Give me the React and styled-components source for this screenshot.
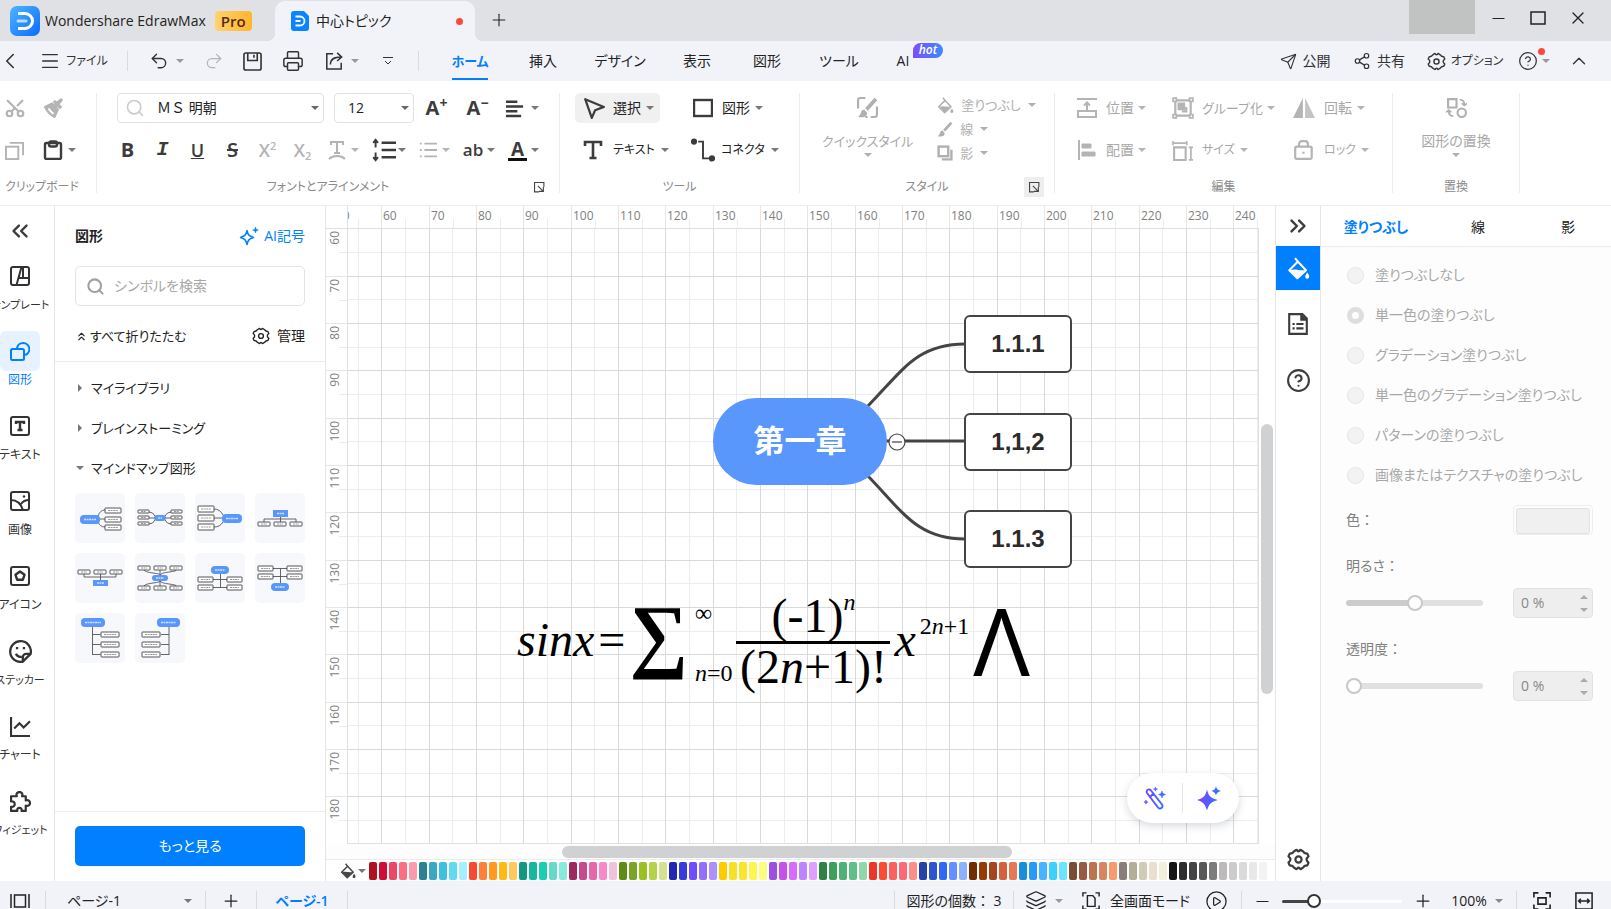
import { useState } from "react";
import styled, { createGlobalStyle, css } from "styled-components";
import {
  Undo2, Redo2, Printer, Share2, ChevronLeft, ChevronUp, Minus, Plus, X, Square, Menu,
  Scissors, Search, ChevronsLeft, ChevronsRight, ChevronsUp, CircleHelp, Send,
  Layers, CirclePlay,
} from "lucide-react";

const GlobalStyle = createGlobalStyle`
* { box-sizing:border-box; }
html, body, #root { height:100%; }
body {
  margin:0;
  overflow:hidden;
  font-family:"Open Sans", "Noto Sans CJK JP", sans-serif;
  font-size:14px;
  line-height:20px;
  color:#222;
  font-feature-settings:"palt";
}
button, input, select { font:inherit; font-feature-settings:inherit; color:inherit; }
button { border:0; padding:0; background:none; white-space:nowrap; }
svg { display:block; flex:none; }
`;

const Shell = styled.div`
display:grid;
grid-template-rows:41px 40px 125px minmax(0,1fr) 28px;
height:100vh;
`;

/* title bar */
const TitleBar = styled.header`
display:flex;
background:#e0e1e5;
padding:0 13px 0 10px;
`;
const Brand = styled.div`
display:flex;
align-items:center;
width:265px;
gap:5px;
white-space:nowrap;
`;
const ProBadge = styled.span`
margin-left:4px;
padding:0 6px;
border-radius:4px;
font-size:15px;
font-weight:600;
color:#5a2a12;
background:linear-gradient(90deg,#ffd36f,#ffb52b);
`;
const DocTab = styled.div`
display:flex;
align-items:center;
position:relative;
width:200px;
margin-top:1px;
padding:0 12px 0 16px;
gap:7px;
background:#f2f3f9;
border-radius:10px 10px 0 0;
&:before, &:after {
  content:"";
  position:absolute;
  bottom:0;
  width:8px;
  height:8px;
}
&:before { right:100%; background:radial-gradient(circle at 0 0,transparent 8px,#f2f3f9 8px); }
&:after { left:100%; background:radial-gradient(circle at 100% 0,transparent 8px,#f2f3f9 8px); }
`;
const Dot = styled.span`
width:7px;
height:7px;
margin-left:auto;
border-radius:50%;
background:#ff4838;
`;
const WindowButton = styled.button`
display:flex;
align-items:center;
justify-content:center;
width:${(p) => p.$w || 40}px;
height:${(p) => p.$h || 36}px;
`;
const Account = styled.div`
width:66px;
height:34px;
margin-left:auto;
margin-right:3px;
background:#c1c3c3;
`;

/* menu bar */
const MenuBar = styled.nav`
display:flex;
align-items:center;
background:#f2f3f9;
white-space:nowrap;
`;
const MenuButton = styled.button`
display:flex;
align-items:center;
justify-content:center;
width:${(p) => p.$w}px;
height:40px;
gap:${(p) => p.$gap || 6}px;
font-size:${(p) => p.$size || 14}px;
color:#333;
`;
const Divider = styled.span`
width:1px;
height:20px;
margin-left:${(p) => p.$ml || 0}px;
background:#dadbe0;
`;
const MenuTab = styled.button`
position:relative;
width:${(p) => p.$w}px;
height:40px;
color:#222;
${(p) => p.$active && css`
color:#0080ff;
font-size:13px;
font-weight:600;
&:after {
  content:"";
  position:absolute;
  left:50%;
  bottom:1px;
  width:36px;
  height:2px;
  margin-left:-18px;
  background:#0080ff;
}
`}
`;
const Hot = styled.span`
position:absolute;
left:50px;
top:2px;
width:30px;
height:15px;
border-radius:8px 8px 8px 0;
background:linear-gradient(90deg,#7c4dff,#3b8bff);
color:#fff;
font-size:12px;
font-style:italic;
font-weight:600;
line-height:14px;
`;
const MenuRight = styled.div`
display:flex;
align-items:center;
margin-left:auto;
padding-right:12px;
`;
const HelpWrap = styled.span`
position:relative;
&:after {
  content:"";
  position:absolute;
  right:-7px;
  top:-3px;
  width:7px;
  height:7px;
  border-radius:50%;
  background:#ff4838;
}
`;
const Caret = styled.span`
flex:none;
border:4px solid transparent;
border-top:4px solid ${(p) => p.$color || "currentColor"};
border-bottom:0;
`;

/* ribbon */
const Ribbon = styled.section`
display:flex;
padding:12px 0;
background:#fff;
border-bottom:1px solid #ececec;
color:#333;
overflow:hidden;
`;
const Group = styled.div`
display:grid;
grid-template-rows:30px 12px 30px 1fr;
grid-template-columns:100%;
flex:0 0 ${(p) => p.$w}px;
height:100px;
padding:0 ${(p) => p.$pad || 0}px;
border-right:1px solid #ececec;
`;
const Row = styled.div`
display:flex;
align-items:center;
grid-row:${(p) => p.$row};
gap:${(p) => p.$gap || 0}px;
padding-left:${(p) => p.$pl || 0}px;
`;
const GroupLabel = styled.div`
display:flex;
align-items:center;
justify-content:center;
grid-row:4;
position:relative;
padding:14px ${(p) => p.$pr || 0}px 0 0;
font-size:12px;
line-height:16px;
color:#8a8a8a;
white-space:nowrap;
`;
const Expand = styled.button`
display:flex;
align-items:center;
justify-content:center;
position:absolute;
right:10px;
bottom:-2px;
width:20px;
height:20px;
background:${(p) => (p.$on ? "#eee" : "none")};
color:#444;
`;
const Tool = styled.button`
display:flex;
align-items:center;
flex:none;
justify-content:${(p) => (p.$left ? "flex-start" : "center")};
width:${(p) => p.$w || 35}px;
height:30px;
padding-left:${(p) => (p.$left ? 8 : 0)}px;
gap:${(p) => p.$gap || 5}px;
border-radius:5px;
background:${(p) => (p.$on ? "#f0f0f0" : "none")};
color:${(p) => (p.disabled ? "#b4b4b4" : "#3c3c3c")};
font-size:${(p) => p.$size || 14}px;
`;
const ToolText = styled.span`
margin-left:${(p) => p.$ml || 0}px;
color:${(p) => (p.$off ? "#a8a8a8" : "#222")};
`;
const BigTool = styled.button`
display:flex;
flex-direction:column;
align-items:center;
grid-row:1 / 4;
padding-top:4px;
color:#b0b0b0;
font-size:${(p) => p.$size || 14}px;
& span:first-of-type { margin:13px 0 2px; color:#a8a8a8; }
`;
const Field = styled.label`
display:flex;
align-items:center;
flex:none;
position:relative;
width:${(p) => p.$w}px;
height:30px;
margin-right:${(p) => p.$mr || 0}px;
border:1px solid #e2e2e2;
border-radius:4px;
& > svg { position:absolute; left:7px; pointer-events:none; }
& select {
  width:100%;
  height:28px;
  padding:0 20px 0 ${(p) => p.$indent}px;
  border:0;
  background:none;
  appearance:none;
  color:#222;
  font-feature-settings:normal;
}
& ${Caret} { position:absolute; right:4px; pointer-events:none; }
`;
const StyleList = styled.div`
display:flex;
flex-direction:column;
grid-row:1 / 4;
& button {
  display:flex;
  align-items:center;
  height:24px;
  gap:7px;
  font-size:13px;
  color:#b0b0b0;
}
`;
const Split = styled.div`
display:flex;
grid-row:1 / 4;
gap:24px;
padding-left:22px;
`;

/* work area */
const Work = styled.main`
display:grid;
grid-template-columns:55px 271px minmax(0,1fr) 46px 290px;
background:#fff;
`;
const Rail = styled.nav`
display:flex;
flex-direction:column;
border-right:1px solid #e6e6e6;
padding-top:15px;
overflow:hidden;
`;
const Collapse = styled.button`
width:40px;
height:20px;
margin-bottom:15px;
display:flex;
align-items:center;
justify-content:center;
color:#3c3c3c;
`;
const RailItem = styled.button`
display:flex;
flex-direction:column;
align-items:center;
width:40px;
height:75px;
flex:none;
font-size:${(p) => (p.$long ? 11 : 12)}px;
line-height:17px;
color:${(p) => (p.$active ? "#0080ff" : "#333")};
& span {
  display:flex;
  align-items:center;
  justify-content:center;
  width:40px;
  height:40px;
  border-radius:6px;
  background:${(p) => (p.$active ? "#e6f2ff" : "none")};
}
`;
const Panel = styled.aside`
display:flex;
flex-direction:column;
border-right:1px solid #e6e6e6;
`;
const PanelTop = styled.div`
padding:20px 20px 15px;
border-bottom:1px solid #ececec;
`;
const Between = styled.div`
display:flex;
justify-content:space-between;
align-items:center;
height:20px;
`;
const PanelTitle = styled.h2`
margin:0;
font-size:14px;
font-weight:700;
`;
const TextButton = styled.button`
display:flex;
align-items:center;
gap:${(p) => p.$gap || 5}px;
font-size:${(p) => p.$size || 14}px;
color:${(p) => (p.$blue ? "#0080ff" : "#222")};
`;
const SearchBox = styled.label`
display:flex;
align-items:center;
height:40px;
margin:20px 0;
padding:0 11px 0 10px;
gap:7px;
border:1px solid #e4e4e4;
border-radius:5px;
color:#a0a0a0;
& input {
  width:100%;
  border:0;
  outline:0;
  font-size:14px;
  background:none;
}
& input::placeholder { color:#a8a8a8; }
`;
const Tree = styled.div`
flex:1;
padding:16px 20px;
`;
const TreeItem = styled.button`
display:flex;
align-items:center;
gap:7px;
height:20px;
margin-bottom:20px;
font-size:13px;
color:#222;
&:before {
  content:"";
  border:4px solid transparent;
  ${(p) => (p.$open ? "margin-left:1px;border-top:4px solid #777;border-bottom:0;" : "margin:0 2px 0 3px;border-left:4px solid #777;border-right:0;")}
}
&:nth-of-type(3) { margin-bottom:15px; }
`;
const Thumbs = styled.div`
display:grid;
grid-template-columns:repeat(4,50px);
gap:10px;
& button {
  width:50px;
  height:50px;
  border-radius:5px;
  background:#f7f8fb;
}
`;
const PanelFoot = styled.div`
padding:14px 20px 15px;
border-top:1px solid #ececec;
`;
const MoreButton = styled.button`
width:100%;
height:40px;
border-radius:5px;
background:#0080ff;
color:#fff;
`;

/* canvas */
const Stage = styled.section`
display:grid;
grid-template-columns:22px minmax(0,1fr) 16px;
grid-template-rows:23px minmax(0,1fr) 16px 21px;
min-height:0;
`;
const Corner = styled.div`
border-right:1px solid #e0e0e0;
border-bottom:1px solid #e0e0e0;
`;
const RulerTop = styled.div`
display:flex;
overflow:hidden;
border-bottom:1px solid #e0e0e0;
font-size:12px;
line-height:20px;
color:#808080;
`;
const TopCell = styled.div`
flex:0 0 ${(p) => p.$w}px;
padding-left:1px;
border-left:1px solid #e6e6e6;
background:linear-gradient(#ececec,#ececec) 23px 13px / 1px 10px no-repeat;
&:first-child { margin-left:-14px; }
`;
const RulerLeft = styled.div`
overflow:hidden;
border-right:1px solid #e0e0e0;
font-size:12px;
line-height:18px;
color:#808080;
`;
const LeftCell = styled.div`
height:${(p) => p.$h}px;
border-bottom:1px solid #e6e6e6;
background:linear-gradient(#ececec,#ececec) 13px 23px / 10px 1px no-repeat;
& span {
  display:block;
  width:18px;
  writing-mode:vertical-rl;
  transform:rotate(180deg);
  padding-bottom:2px;
}
`;
const gridStops = (dir) => `linear-gradient(${dir},#d9d9d9 1px,transparent 1px 48px,#d9d9d9 48px 49px,transparent 49px 95px,#d9d9d9 95px 96px,transparent 96px)`;
const halfStops = (dir) => `linear-gradient(${dir},transparent 24px,#ededed 24px 25px,transparent 25px 71px,#ededed 71px 72px,transparent 72px 119px,#ededed 119px 120px,transparent 120px)`;
const Canvas = styled.div`
position:relative;
overflow:hidden;
border-right:1px solid #e0e0e0;
border-bottom:1px solid #e0e0e0;
background-image:${gridStops("to right")},${gridStops("to bottom")},${halfStops("to right")},${halfStops("to bottom")};
background-size:142px 142px;
background-position:33px -1px;
`;
const Links = styled.svg`
position:absolute;
left:499px;
top:79px;
`;
const Root = styled.div`
position:absolute;
left:365px;
top:169px;
width:174px;
height:87px;
display:flex;
align-items:center;
justify-content:center;
padding-bottom:4px;
border-radius:44px;
background:#5997fc;
color:#fff;
font-size:31px;
font-weight:700;
`;
const Topic = styled.div`
position:absolute;
left:616px;
top:${(p) => p.$y}px;
width:108px;
height:58px;
display:flex;
align-items:center;
justify-content:center;
border:2px solid #444;
border-radius:6px;
background:#fff;
color:#2b2b2b;
font-family:"Liberation Sans", sans-serif;
font-size:24px;
font-weight:700;
`;
const Formula = styled.div`
position:absolute;
left:169px;
top:358px;
height:112px;
display:flex;
align-items:center;
gap:4px;
font-family:"Liberation Serif", serif;
font-size:48px;
line-height:56px;
color:#000;
white-space:nowrap;
& sup { font-size:24px; line-height:24px; vertical-align:22px; }
`;
const Lead = styled.span`
display:flex;
gap:4px;
padding-bottom:6px;
`;
const Sum = styled.span`
padding-bottom:16px;
font-size:82px;
line-height:82px;
font-weight:700;
`;
const Limits = styled.span`
display:flex;
flex-direction:column;
justify-content:space-between;
height:84px;
padding-left:3px;
font-size:24px;
line-height:24px;
`;
const Fraction = styled.span`
display:flex;
flex-direction:column;
align-items:center;
width:154px;
padding-top:2px;
& > span:first-child {
  width:100%;
  text-align:center;
  height:54px;
  line-height:36px;
  border-bottom:3px solid #000;
}
& > span:last-child { height:54px; line-height:46px; }
`;
const Wedge = styled.span`
padding-bottom:6px;
font-family:"Open Sans", sans-serif;
font-size:94px;
line-height:94px;
`;
const AiPill = styled.div`
position:absolute;
right:19px;
bottom:20px;
display:flex;
align-items:center;
width:112px;
height:50px;
padding-left:2px;
border-radius:25px;
background:#fff;
box-shadow:0 3px 8px rgba(40,50,80,0.18);
& button { flex:1; display:flex; justify-content:center; }
& button + button { border-left:1px solid #e6e6e6; height:30px; align-items:center; padding-right:4px; }
`;
const ScrollX = styled.div`
grid-column:1 / 4;
padding:2px 0 0 236px;
background:#fdfdfd;
border-bottom:1px solid #ececec;
&:before {
  content:"";
  display:block;
  width:450px;
  height:12px;
  border-radius:6px;
  background:#d0d1d3;
}
`;
const ScrollY = styled.div`
grid-row:1 / 3;
grid-column:3;
padding:218px 0 0 2px;
&:before {
  content:"";
  display:block;
  width:12px;
  height:270px;
  border-radius:6px;
  background:#d0d1d3;
}
`;
const ColorBar = styled.div`
grid-column:1 / 4;
display:flex;
align-items:center;
gap:2px;
padding-left:14px;
overflow:hidden;
`;
const PickButton = styled.button`
display:flex;
align-items:center;
flex:none;
width:27px;
gap:2px;
color:#444;
`;
const Swatch = styled.button`
flex:0 0 8px;
height:18px;
border-radius:2px;
background:${(p) => p.$c};
`;

/* right side */
const SideTabs = styled.nav`
display:flex;
flex-direction:column;
align-items:center;
border-left:1px solid #e6e6e6;
border-right:1px solid #e6e6e6;
`;
const SideButton = styled.button`
display:flex;
align-items:center;
justify-content:center;
width:44px;
height:${(p) => p.$h || 44}px;
margin-bottom:${(p) => p.$mb || 0}px;
margin-top:${(p) => (p.$last ? "auto" : 0)};
background:${(p) => (p.$active ? "#0080ff" : "none")};
color:${(p) => (p.$active ? "#fff" : "#3c3c3c")};
`;
const Props = styled.aside`
background:#fdfdfd;
color:#808080;
`;
const PropTabs = styled.div`
display:grid;
grid-template-columns:110fr 94fr 86fr;
height:41px;
padding-top:1px;
background:#fff;
border-bottom:1px solid #ececec;
& button { color:#222; }
& button:first-child { color:#0080ff; font-weight:600; }
`;
const PropBody = styled.div`
padding:18px 18px 0 25px;
`;
const RadioRow = styled.label`
display:flex;
align-items:center;
height:20px;
margin-bottom:20px;
gap:11px;
font-size:14px;
color:#a8a8a8;
white-space:nowrap;
& input {
  flex:none;
  appearance:none;
  width:17px;
  height:17px;
  margin:0 0 0 1px;
  border:1px solid #e4e4e4;
  border-radius:50%;
  background:#f3f3f3;
}
& input:checked { border:5px solid #dedede; background:#fff; }
`;
const PropRow = styled.div`
display:flex;
align-items:center;
justify-content:space-between;
height:30px;
margin-top:${(p) => p.$mt || 0}px;
`;
const ColorButton = styled.button`
width:80px;
height:30px;
padding:2px;
border:1px solid #eee;
border-radius:4px;
&:before {
  content:"";
  display:block;
  height:24px;
  border:1px solid #e2e2e2;
  border-radius:3px;
  background:#f0f0f0;
}
`;
const PropLabel = styled.label`
display:block;
height:20px;
margin-top:${(p) => p.$mt}px;
`;
const Colon = styled.span`
font-feature-settings:normal;
`;
const Slider = styled.input`
appearance:none;
width:${(p) => p.$w}px;
height:${(p) => p.$h}px;
margin:0;
border-radius:3px;
background:linear-gradient(90deg,${(p) => p.$on} ${(p) => p.$fill}%,${(p) => p.$rest} ${(p) => p.$fill}%);
&::-webkit-slider-thumb {
  appearance:none;
  width:${(p) => p.$thumb}px;
  height:${(p) => p.$thumb}px;
  border:2px solid ${(p) => p.$ring};
  border-radius:50%;
  background:#fff;
}
`;
const Spin = styled.span`
display:flex;
align-items:center;
width:80px;
height:30px;
padding:0 4px 0 7px;
border:1px solid #e2e2e2;
border-radius:4px;
background:#eee;
& input { width:50px; border:0; padding:0; background:none; color:#888; }
& i { display:flex; flex-direction:column; gap:9px; margin-left:auto; }
`;
const CaretUp = styled(Caret)`
transform:rotate(180deg);
`;

/* status bar */
const Status = styled.footer`
display:flex;
align-items:center;
height:40px;
background:#f2f3f9;
white-space:nowrap;
color:#222;
`;
const StatusItem = styled.button`
display:flex;
align-items:center;
justify-content:${(p) => (p.$start ? "flex-start" : "center")};
width:${(p) => p.$w}px;
gap:${(p) => p.$gap || 8}px;
padding:${(p) => (p.$start ? "0 13px 0 21px" : 0)};
color:${(p) => (p.$blue ? "#0080ff" : "#222")};
font-weight:${(p) => (p.$blue ? 600 : 400)};
& ${Caret} { margin-left:${(p) => (p.$start ? "auto" : 0)}; }
`;
const StatusRight = styled.div`
display:flex;
align-items:center;
margin-left:auto;
padding-right:10px;
`;

/* icons */
const Svg = ({ s = 20, w = 2, children, ...rest }) => (
  <svg width={s} height={s} viewBox="0 0 20 20" fill="none" stroke="currentColor" strokeWidth={w} {...rest}>{children}</svg>
);
const Bucket = ({ s }) => (
  <Svg s={s} w={1.8}>
    <path d="M7 1l2.500 3L2 11.500l7 7 7.500-7L9.500 4" strokeLinejoin="round" />
    <path d="M3 11.500c4 -2 9 1 13 -0.500l-7 7z" fill="currentColor" stroke="none" />
    <path d="M17.500 13.500c1.500 2 2.300 3 1.500 4.500a1.700 1.700 0 0 1-3 0c-.6-1.400.5-2.600 1.500-4.500z" fill="currentColor" stroke="none" />
  </Svg>
);
const Brush = () => (
  <>
    <path d="M18 2L9 12" strokeWidth="3.500" />
    <path d="M7 12c-4 0-2 4-6 7 5 1 9 0 8.500-4z" fill="currentColor" stroke="none" />
  </>
);
const Gear = ({ s = 20, w = 1.5 }) => (
  <Svg s={s} w={w} strokeLinejoin="round">
    <path d="M7.300 2.200Q8.300 1 9 2.300Q10 3.300 11 2.300Q11.700 1 12.700 2.200L14.300 3.200Q15 4.700 16.300 4.700Q17.800 4.500 18.200 6L18.700 7.300Q17 8.800 17 10Q17 11.200 18.700 12.700L18.200 14Q17.800 15.500 16.300 15.300Q15 15.300 14.300 16.800L12.700 17.800Q11.700 19 11 17.700Q10 16.700 9 17.700Q8.300 19 7.300 17.800L5.700 16.800Q5 15.300 3.700 15.300Q2.200 15.500 1.800 14L1.300 12.700Q3 11.200 3 10Q3 8.800 1.300 7.300L1.800 6Q2.200 4.500 3.700 4.700Q5 4.700 5.700 3.200z" />
    <circle cx="10" cy="10" r="2.700" />
  </Svg>
);
const Logo = () => (
  <svg width="30" height="30" viewBox="0 0 30 30">
    <defs><linearGradient id="lg" x1="0" y1="0" x2="1" y2="1"><stop stopColor="#4fb4ff" /><stop offset="1" stopColor="#0a6cff" /></linearGradient></defs>
    <rect width="30" height="30" rx="7" fill="url(#lg)" />
    <path d="M8 7.500h7a7.500 7.500 0 0 1 0 15H8" fill="none" stroke="#fff" strokeWidth="3" />
    <path d="M8 15h8" stroke="#b8e0ff" strokeWidth="3" strokeLinecap="round" />
  </svg>
);
const DocLogo = () => (
  <svg width="18" height="20" viewBox="0 0 18 20">
    <path d="M3 0h10l5 5v12a3 3 0 0 1-3 3H3a3 3 0 0 1-3-3V3a3 3 0 0 1 3-3z" fill="#0a84ff" />
    <path d="M4.500 5.500h4.500a4.500 4.500 0 0 1 0 9H4.500M4.500 10h5" fill="none" stroke="#fff" strokeWidth="1.800" />
  </svg>
);
const Spark = () => (
  <Svg s={20} w={1.5} strokeLinejoin="round">
    <path d="M8 4.500C9 9 10 10 14.500 11.500C10 13 9 14 8 18.500C7 14 6 13 1.500 11.500C6 10 7 9 8 4.500z" />
    <path d="M16.500 1C17 3.200 17.300 3.500 19.500 4C17.300 4.500 17 5 16.500 7C16 5 15.700 4.500 13.500 4C15.700 3.500 16 3.200 16.500 1z" fill="currentColor" strokeWidth="0.500" />
  </Svg>
);
const Letter = styled.span`
font-size:${(p) => p.$s || 19}px;
line-height:22px;
font-weight:${(p) => p.$b || 600};
font-style:${(p) => (p.$i ? "italic" : "normal")};
text-decoration:${(p) => p.$d || "none"};
font-family:${(p) => (p.$mono ? '"Liberation Mono", monospace' : '"Open Sans", sans-serif')};
& sup, & sub { font-size:${(p) => p.$sup || 11}px; line-height:10px; }
& sup { vertical-align:7px; }
& sub { vertical-align:-3px; }
`;
const FontColorBar = styled(Letter)`
border-bottom:3px solid #111;
line-height:18px;
padding:0 3px;
`;
const CornerArrow = () => <Svg s={11} w={2}><path d="M9 18H1V1h17v8M7 7l9 9M17 9v8H9" /></Svg>;
const LinesIcon = ({ d, s = 20, w = 2 }) => <Svg s={s} w={w}><path d={d} /></Svg>;

const PALETTE = `b01020 d00e34 ec4765 fb6f80 fa9cae 2a8193 3aa7c5 40c0e0 60daf0 a5f0ff
f84830 ff8038 ff9a1e ffb914 ffc85a 129880 16b6a0 1acdb4 68d9c8 88eadc
9c2a60 c64a8c e668aa f988c8 f2c2dc 5e8c14 78a428 9ac024 b4d24a d2e290
2026b0 343ddc 704cff 9270fb ae90fc fccc00 f8e028 f9e52c fdf650 fdfd80
9c50e0 c650ea d66cfb be84ff dda0ff 2e8246 3ca05a 50b078 62be88 90d8aa
ec362a fa4c36 fc6060 fc6a78 ff8e88 2642a4 2e54d0 3068f4 6690ff 8cb0fc
722c00 983a04 a84420 d46040 e67854 1a8cdc 2a9af8 48b4ff 3cd0ff 6ae4ff
7a4c34 985a42 ba7450 d68660 f79a6c 8c7e76 b4ae98 d2cab8 eae0d0 f2f0da
161616 2e2e2e 444444 585858 7c7c7c bcbabb cccccc dadada e8e8e8 f3f3f3 ffffff`.split(/\s+/);

// root: x y w h radius, nodes: x y, size: node w h
const THUMBS = [
  { root: [5, 22, 20, 9, 4], size: [16, 5], nodes: [[30, 15], [30, 24], [30, 32]], d: "M23 23Q25 17 30 17M25 26h5M23 29Q25 34 30 34" },
  { root: [19, 22, 12, 6, 3], size: [11, 3], nodes: [[3, 17], [3, 23], [3, 29], [36, 17], [36, 23], [36, 29]], d: "M14 19Q18 19 20 23M14 25h22M14 31Q18 31 20 27M36 19Q32 19 30 23M36 31Q32 31 30 27" },
  { root: [27, 21, 20, 9, 4], size: [16, 6], nodes: [[3, 13], [3, 22], [3, 31]], d: "M19 16Q25 16 28 22M19 25h8M19 34Q25 34 28 29" },
  { root: [18, 17, 15, 7, 0], size: [12, 4], nodes: [[3, 29], [19, 29], [35, 29]], d: "M25.500 24v5M9 29v-3h32v3" },
  { root: [18, 27, 15, 6, 0], size: [12, 4], nodes: [[3, 17], [19, 17], [35, 17]], d: "M25.500 21v6M9 21v3h32v-3" },
  { root: [17, 22, 16, 6, 3], size: [12, 4], nodes: [[3, 13], [19, 13], [35, 13], [3, 33], [19, 33], [35, 33]], d: "M25 17v16M9 17Q10 19 18 20T25 22Q26 20 34 19T41 17M9 33Q10 31 18 30T25 28Q26 30 34 31T41 33" },
  { root: [16, 13, 18, 8, 4], size: [15, 5], nodes: [[3, 24], [32, 24], [3, 32], [32, 32]], d: "M25.500 21v13.500M18 26.500h14M18 34.500h14" },
  { root: [16, 30, 18, 8, 4], size: [15, 5], nodes: [[3, 13], [32, 13], [3, 21], [32, 21]], d: "M25.500 15.500V30M18 15.500h14M18 23.500h14" },
  { root: [6, 5, 24, 9, 4], size: [18, 5], nodes: [[26, 19], [26, 29], [26, 39]], d: "M17.500 14v28M17.500 21.500h8M17.500 31.500h8M17.500 41.500h8" },
  { root: [22, 5, 23, 9, 4], size: [18, 5], nodes: [[7, 19], [7, 29], [7, 39]], d: "M34 14v28M34 21.500h-8M34 31.500h-8M34 41.500h-8" },
];

const Thumb = ({ root, size, nodes, d }) => (
  <svg width="50" height="50" viewBox="0 0 50 50">
    <path d={d} fill="none" stroke="#555" strokeWidth="0.900" />
    {nodes.map(([x, y]) => (
      <g key={x + "-" + y}>
        <rect x={x} y={y} width={size[0]} height={size[1]} rx="0.400" fill="#fff" stroke="#444" strokeWidth="0.900" />
        <path d={`M${x + 3} ${y + size[1] / 2}h${size[0] - 6}`} stroke="#999" strokeWidth="1" strokeDasharray="2 0.600" />
      </g>
    ))}
    <rect x={root[0]} y={root[1]} width={root[2]} height={root[3]} rx={root[4]} fill="#5997fc" />
    <path d={`M${root[0] + 4} ${root[1] + root[3] / 2}h${root[2] - 8}`} stroke="#cfe1ff" strokeWidth="1.400" strokeDasharray="2 0.500" />
  </svg>
);

const RAIL = [
  ["テンプレート", <Svg><rect x="1" y="1" width="18" height="18" rx="2" /><path d="M6.500 19L11.500 1M9 12h10M13 12V1" /></Svg>],
  ["図形", <Svg><rect x="1" y="8" width="13" height="11" rx="1.500" /><path d="M7 7a6.200 6.200 0 1 1 8 7" /></Svg>],
  ["テキスト", <Svg><rect x="1" y="1" width="18" height="18" rx="2" /><path d="M6 8V6h8v2M10 6v8M7.500 14h5" strokeWidth="2.400" /></Svg>],
  ["画像", <Svg><rect x="1" y="1" width="18" height="18" rx="2" /><path d="M1 9c6 0 10 4 12 10M11 13c2-3 5-4 8-4" /><circle cx="14" cy="5.500" r="1.200" fill="currentColor" stroke="none" /></Svg>],
  ["アイコン", <Svg><rect x="1" y="1" width="18" height="18" rx="2" /><path d="M10 5.500l4.500 3.300-1.700 5H7.200l-1.700-5z" strokeLinejoin="round" strokeWidth="2.400" /></Svg>],
  ["ステッカー", <Svg s={23}><path d="M12 18.800A9 9 0 1 1 18.800 12L12 18.800V15a3 3 0 0 1 3-3h3.800M6 12c1 2 3 3 5 2.500" /><path d="M7 6v2M13 6v2" /></Svg>],
  ["チャート", <Svg s={21}><path d="M1 1v18h18M4 12l5-5 4 4 6-6" /></Svg>],
  ["ウィジェット", <Svg s={21} w={2.1} strokeLinejoin="round"><path d="M1 5h5.500C5.500 2.500 7 1 9 1s3.500 1.500 2.500 4H15v4c2.500-.8 4 .6 4 2.500s-1.500 3.300-4 2.500v5h-4c.5-2-.5-3-2-3s-2.500 1-2 3H1v-4c2 .4 3.500-.6 3.500-2.500S3 9.600 1 10z" /></Svg>],
];
const FILLS = ["塗りつぶしなし", "単一色の塗りつぶし", "グラデーション塗りつぶし", "単一色のグラデーション塗りつぶし", "パターンの塗りつぶし", "画像またはテクスチャの塗りつぶし"];
const TICKS = [48, 47, 47];

const TopBars = () => (
  <>
    <TitleBar>
      <Brand><Logo />Wondershare EdrawMax<ProBadge>Pro</ProBadge></Brand>
      <DocTab><DocLogo />中心トピック<Dot /></DocTab>
      <WindowButton $w={48} $h={40} aria-label="新しいタブ"><Plus size={20} strokeWidth={1.3} /></WindowButton>
      <Account />
      <WindowButton aria-label="最小化"><Minus size={19} strokeWidth={1.5} /></WindowButton>
      <WindowButton aria-label="最大化"><svg width="16" height="14" fill="none" stroke="#222" strokeWidth="1.500"><path d="M1 1h14v12H1z" /></svg></WindowButton>
      <WindowButton aria-label="閉じる"><X size={20} strokeWidth={1.6} /></WindowButton>
    </TitleBar>
    <MenuBar>
      <MenuButton $w={20} aria-label="戻る"><ChevronLeft size={26} strokeWidth={1.5} /></MenuButton>
      <MenuButton $w={107} $size={12} $gap={5}><Menu size={22} strokeWidth={1.5} />ファイル</MenuButton>
      <Divider />
      <MenuButton $w={76} $gap={7} aria-label="元に戻す"><Undo2 size={20} strokeWidth={1.7} /><Caret $color="#999" /></MenuButton>
      <MenuButton $w={20} aria-label="やり直し"><Redo2 size={20} strokeWidth={1.5} color="#b4b4b4" /></MenuButton>
      <MenuButton $w={57} aria-label="保存"><Svg s={19} w={1.7}><rect x="1" y="1" width="18" height="18" rx="2" /><path d="M5 1v8h10V1M11.500 3v3" /></Svg></MenuButton>
      <MenuButton $w={24} aria-label="印刷"><Printer size={22} strokeWidth={1.6} /></MenuButton>
      <MenuButton $w={73} $gap={8} aria-label="エクスポート"><Svg s={18} w={1.7}><path d="M9 2H2v17h16v-7M6 14c0-6 4-8.500 12-8.500M13.500 1l5 4.500-5 4.500" /></Svg><Caret $color="#999" /></MenuButton>
      <MenuButton $w={20} aria-label="その他"><Svg s={10}><path d="M0 3h20M4 10l6 6 6-6" /></Svg></MenuButton>
      <Divider $ml={20} />
      <MenuTab $w={102} $active>ホーム</MenuTab>
      <MenuTab $w={44}>挿入</MenuTab>
      <MenuTab $w={110}>デザイン</MenuTab>
      <MenuTab $w={44}>表示</MenuTab>
      <MenuTab $w={96}>図形</MenuTab>
      <MenuTab $w={48}>ツール</MenuTab>
      <MenuTab $w={80}>AI<Hot>hot</Hot></MenuTab>
      <MenuRight>
        <MenuButton $w={64}><Send size={17} strokeWidth={1.6} />公開</MenuButton>
        <MenuButton $w={84}><Share2 size={18} strokeWidth={1.6} />共有</MenuButton>
        <MenuButton $w={88} $size={12} $gap={5}><Gear s={19} />オプション</MenuButton>
        <MenuButton $w={50} $gap={4} aria-label="ヘルプ"><HelpWrap><CircleHelp size={20} strokeWidth={1.5} /></HelpWrap><Caret $color="#999" /></MenuButton>
        <MenuButton $w={40} aria-label="折りたたむ"><ChevronUp size={22} strokeWidth={1.5} /></MenuButton>
      </MenuRight>
    </MenuBar>
  </>
);

const RibbonBar = () => (
  <Ribbon>
    <Group $w={97}>
      <Row $row={1}>
        <Tool disabled $w={30} aria-label="切り取り"><Scissors size={22} strokeWidth={2.4} style={{ rotate: "-90deg" }} /></Tool>
        <Tool disabled $w={48} aria-label="書式のコピー"><Svg><path d="M1 9L8 5.500l6 6L10.500 19C6 17 3 13 1 9zM11 9l6-6" fill="currentColor" /><path d="M4.500 10.500c2 3 4 4.500 5 5.300" stroke="#fff" /><path d="M11 4l5 5M12 7l5-5" strokeWidth="3.500" strokeLinecap="round" /></Svg></Tool>
      </Row>
      <Row $row={3}>
        <Tool disabled $w={28} aria-label="コピー"><Svg s={19}><rect x="1" y="6" width="13" height="13" /><path d="M5 2h14v13" /></Svg></Tool>
        <Tool $w={62} $gap={5} aria-label="貼り付け"><Svg w={2.4}><rect x="2" y="3" width="16" height="16" rx="1.500" /><rect x="6" y="1.500" width="8" height="5" rx="2" /></Svg><Caret $color="#777" /></Tool>
      </Row>
      <GroupLabel $pr={12}>クリップボード</GroupLabel>
    </Group>
    <Group $w={463}>
      <Row $row={1} $pl={20}>
        <Field $w={207} $mr={10} $indent={39}><Search size={20} strokeWidth={2} color="#ccc" /><select aria-label="フォント"><option>ＭＳ 明朝</option></select><Caret $color="#666" /></Field>
        <Field $w={80} $indent={13}><select aria-label="サイズ"><option>12</option></select><Caret $color="#666" /></Field>
        <Tool $w={45} aria-label="拡大"><Letter $s={20} $b={700} $sup={14}>A<sup>+</sup></Letter></Tool>
        <Tool $w={37} aria-label="縮小"><Letter $s={20} $b={700} $sup={14}>A<sup>−</sup></Letter></Tool>
        <Tool $w={52} $gap={7} aria-label="配置"><LinesIcon s={19} w={2.6} d="M1 3h12M1 8h18M1 13h12M1 18h16" /><Caret $color="#777" /></Tool>
      </Row>
      <Row $row={3} $pl={13}>
        <Tool aria-label="太字"><Letter $s={20} $b={700}>B</Letter></Tool>
        <Tool aria-label="斜体"><Letter $s={20} $b={700} $i $mono>I</Letter></Tool>
        <Tool aria-label="下線"><Letter $s={18} $d="underline">U</Letter></Tool>
        <Tool aria-label="取り消し線"><Letter $s={20} $d="line-through">S</Letter></Tool>
        <Tool disabled aria-label="上付き"><Letter $s={18}>X<sup>2</sup></Letter></Tool>
        <Tool disabled aria-label="下付き"><Letter $s={18}>X<sub>2</sub></Letter></Tool>
        <Tool disabled $w={46} $gap={4} aria-label="文字効果"><Svg s={20}><path d="M4 5V2h12v3M10 2v11M7 13h6M2 19c4-4 12-4 16 0" /></Svg><Caret /></Tool>
        <Tool $w={46} $gap={2} aria-label="行間"><Svg s={24}><path d="M8 4h12M8 10h12M8 16h12" /><path d="M3 2v6M3 12v6M1 4l2-2.500L5 4M1 16l2 2.500L5 16" strokeWidth="1.600" /></Svg><Caret $color="#777" /></Tool>
        <Tool disabled $w={45} aria-label="箇条書き"><LinesIcon s={18} d="M1 3h2M6 3h14M1 10h2M6 10h14M1 17h2M6 17h14" /><Caret /></Tool>
        <Tool $w={44} $gap={4} aria-label="文字種"><Letter $s={17}>ab</Letter><Caret $color="#777" /></Tool>
        <Tool $w={45} $gap={4} aria-label="文字色"><FontColorBar $s={19} $b={700}>A</FontColorBar><Caret $color="#777" /></Tool>
      </Row>
      <GroupLabel>フォントとアラインメント<Expand aria-label="フォント設定"><CornerArrow /></Expand></GroupLabel>
    </Group>
    <Group $w={240} $pad={15}>
      <Row $row={1} $gap={25}>
        <Tool $left $on $w={85}><Svg s={22}><path d="M2 2l17 7-8 3-3 7z" strokeLinejoin="round" /></Svg><ToolText $ml={3}>選択</ToolText><Caret $color="#777" /></Tool>
        <Tool $left $w={85}><Svg s={20} w={2.4}><rect x="1" y="2" width="18" height="16" /></Svg><ToolText $ml={4}>図形</ToolText><Caret $color="#777" /></Tool>
      </Row>
      <Row $row={3} $gap={8}>
        <Tool $left $w={100} $size={12} $gap={6}><Svg s={20} w={2.6}><path d="M2 6V2h16v4M10 2v16M6.500 18h7" /></Svg><ToolText $ml={4}>テキスト</ToolText><Caret $color="#777" /></Tool>
        <Tool $left $w={100} $size={12} $gap={6}><Svg s={24} w={2}><circle cx="2.500" cy="3" r="1.600" fill="currentColor" /><circle cx="17.500" cy="17" r="1.600" fill="currentColor" /><path d="M6 3h4v14h5" strokeWidth="1.600" /></Svg><ToolText>コネクタ</ToolText><Caret $color="#777" /></Tool>
      </Row>
      <GroupLabel>ツール</GroupLabel>
    </Group>
    <Group $w={255}>
      <Split>
        <BigTool disabled $size={13}><Svg s={21} w={2}><path d="M8 1H3a2 2 0 0 0-2 2v8M13 19h4a2 2 0 0 0 2-2V9M8 19h2" /><Brush /></Svg><span>クイックスタイル</span><Caret /></BigTool>
        <StyleList>
          <button disabled><Bucket s={17} />塗りつぶし<Caret /></button>
          <button disabled><Svg s={16}><Brush /></Svg>線<Caret /></button>
          <button disabled><Svg s={16} w={3}><rect x="2" y="2" width="12" height="12" /><path d="M18 6v12H6" strokeWidth="3" /></Svg>影<Caret /></button>
        </StyleList>
      </Split>
      <GroupLabel>スタイル<Expand $on aria-label="スタイル設定"><CornerArrow /></Expand></GroupLabel>
    </Group>
    <Group $w={338} $pad={14}>
      <Row $row={1}>
        <Tool disabled $left $w={95} $gap={4}><Svg><path d="M0 1h20M1 13h18v6H1zM10 12V5M7 7.500l3-3 3 3" /></Svg><ToolText $off $ml={5}>位置</ToolText><Caret /></Tool>
        <Tool disabled $left $w={121} $size={13} $gap={4}><Svg s={22}><path d="M3 3h14v14H3z" /><path d="M1 1h3v3H1zM16 1h3v3h-3zM1 16h3v3H1zM16 16h3v3h-3z" fill="#fff" strokeWidth="1.500" /><path d="M6 6h5v5H6z" fill="currentColor" /><path d="M13 9v4H9" /></Svg><ToolText $off $ml={4}>グループ化</ToolText><Caret /></Tool>
        <Tool disabled $left $w={90}><Svg s={22} stroke="none"><path d="M0 19L9 1v18z" fill="currentColor" /><path d="M20 19L11 1v18z" fill="currentColor" opacity="0.800" /></Svg><ToolText $off $ml={4}>回転</ToolText><Caret /></Tool>
      </Row>
      <Row $row={3}>
        <Tool disabled $left $w={95} $gap={4}><Svg><path d="M2 0v20" /><path d="M5 4h9v4H5zM5 12h13v4H5z" fill="currentColor" strokeWidth="1" /></Svg><ToolText $off $ml={5}>配置</ToolText><Caret /></Tool>
        <Tool disabled $left $w={121} $size={12}><Svg s={21}><path d="M2 7h11v12H2z" /><path d="M1 1v4M14 1v4M1 3h13M16 7h4M16 19h4M18 7v12" strokeWidth="1.600" /></Svg><ToolText $off $ml={4}>サイズ</ToolText><Caret /></Tool>
        <Tool disabled $left $w={90} $size={12}><Svg s={22}><rect x="2" y="7" width="15" height="11" rx="1.500" /><path d="M5.500 7V4.500a2.500 2.500 0 0 1 2.500-2.500h3a2.500 2.500 0 0 1 2.500 2.500V7M9.500 11.500v2" /></Svg><ToolText $off $ml={4}>ロック</ToolText><Caret /></Tool>
      </Row>
      <GroupLabel>編集</GroupLabel>
    </Group>
    <Group $w={127}>
      <BigTool disabled><Svg s={21}><path d="M2 2h8v8H2z" /><circle cx="15" cy="15" r="4" /><path d="M13 2.500c3 0 4.500 1 4.500 5M15 6l2.500 2L20 6M7 18c-3 0-4.500-1-4.500-5M0 14.500l2.500-2 2.500 2" strokeWidth="1.600" /></Svg><span>図形の置換</span><Caret /></BigTool>
      <GroupLabel>置換</GroupLabel>
    </Group>
  </Ribbon>
);

const ShapePanel = () => (
  <Panel>
    <PanelTop>
      <Between><PanelTitle>図形</PanelTitle><TextButton $blue><Spark />AI記号</TextButton></Between>
      <SearchBox><Search size={19} strokeWidth={2.6} /><input aria-label="シンボルを検索" placeholder="シンボルを検索" /></SearchBox>
      <Between><TextButton $gap={2} $size={13}><ChevronsUp size={13} strokeWidth={2} />すべて折りたたむ</TextButton><TextButton $gap={7}><Gear s={18} />管理</TextButton></Between>
    </PanelTop>
    <Tree>
      <TreeItem>マイライブラリ</TreeItem>
      <TreeItem>ブレインストーミング</TreeItem>
      <TreeItem $open>マインドマップ図形</TreeItem>
      <Thumbs>{THUMBS.map((t, i) => <button key={i} aria-label={"図形 " + (i + 1)}><Thumb {...t} /></button>)}</Thumbs>
    </Tree>
    <PanelFoot><MoreButton>もっと見る</MoreButton></PanelFoot>
  </Panel>
);

const Drawing = () => (
  <Canvas>
    <Links width="130" height="300" fill="none" stroke="#444" strokeWidth="3">
      <path d="M20 99C56 62 70 36 118 36M38 133h80M20 167C56 204 70 231 118 231" />
      <circle cx="50" cy="134" r="8" fill="#fff" strokeWidth="1.200" />
      <path d="M45 134h10" strokeWidth="1.200" />
    </Links>
    <Root>第一章</Root>
    <Topic $y={86}>1.1.1</Topic>
    <Topic $y={184}>1,1,2</Topic>
    <Topic $y={281}>1.1.3</Topic>
    <Formula>
      <Lead><i>sinx</i><span>=</span></Lead>
      <Sum>∑</Sum>
      <Limits><span>∞</span><span><i>n</i>=0</span></Limits>
      <Fraction><span>(-1)<sup><i>n</i></sup></span><span>(2<i>n</i>+1)!</span></Fraction>
      <Lead><i>x</i><span><sup>2<i>n</i>+1</sup></span></Lead>
      <Wedge>Λ</Wedge>
    </Formula>
    <AiPill>
      <button aria-label="AIツール">
        <svg width="24" height="24" viewBox="0 0 24 24" fill="none" stroke="url(#ai)" strokeWidth="2">
          <defs><linearGradient id="ai" gradientUnits="userSpaceOnUse" x1="0" y1="0" x2="24" y2="0"><stop stopColor="#8340ff" /><stop offset="1" stopColor="#2878ff" /></linearGradient></defs>
          <path d="M4 7a2.300 2.300 0 0 1 4-2.500l11 14a2.300 2.300 0 0 1-4 3zM7 11l3-3" />
          <path d="M19 5l1 2.500 2.500 1-2.500 1-1 2.500-1-2.500-2.500-1 2.500-1zM12.500 1l.6 1.500 1.500.6-1.500.6-.6 1.500-.6-1.500-1.500-.6 1.500-.6zM3 14l.6 1.500 1.500.6-1.500.6L3 18.200l-.6-1.500-1.500-.6 1.500-.6z" fill="url(#ai)" strokeWidth="0.500" />
        </svg>
      </button>
      <button aria-label="AIアシスタント">
        <svg width="24" height="24" viewBox="0 0 24 24" fill="url(#ai)">
          <path d="M10 3.500C11.500 10 13.500 12 21 14C13.500 16 12 18 10 24.500C8 18 6.500 16 0 14C6.500 12 8.500 10 10 3.500z" />
          <path d="M19 0C19.700 3 20.500 4 24 5C20.500 6 19.700 7 19 9.500C18.300 7 17.500 6 14.500 5C17.500 4 18.300 3 19 0z" />
        </svg>
      </button>
    </AiPill>
  </Canvas>
);

const CanvasArea = () => (
  <Stage>
    <Corner />
    <RulerTop>{Array.from({ length: 20 }, (_, i) => <TopCell key={i} $w={TICKS[(i + 2) % 3]}>{50 + i * 10}</TopCell>)}</RulerTop>
    <ScrollY />
    <RulerLeft>{Array.from({ length: 13 }, (_, i) => <LeftCell key={i} $h={TICKS[i % 3]}><span>{60 + i * 10}</span></LeftCell>)}</RulerLeft>
    <Drawing />
    <ScrollX />
    <ColorBar>
      <PickButton aria-label="塗りつぶし色"><Bucket s={16} /><Caret $color="#777" /></PickButton>
      {PALETTE.map((c, i) => <Swatch key={i} $c={"#" + c} aria-label={"#" + c} />)}
    </ColorBar>
  </Stage>
);

const Amount = ({ id, label, value, mt }) => (
  <>
    <PropLabel htmlFor={id} $mt={mt}>{label}<Colon>：</Colon></PropLabel>
    <PropRow $mt={12}>
      <Slider id={id} type="range" disabled defaultValue={value} $w={137} $h={6} $thumb={16} $fill={value} $on="#ccc" $rest="#e0e0e0" $ring="#c8c8c8" />
      <Spin><input aria-label={label} disabled defaultValue="0 %" /><i><CaretUp $color="#aaa" /><Caret $color="#aaa" /></i></Spin>
    </PropRow>
  </>
);

const PropertyPanel = () => {
  const [fill] = useState(1);
  return <Props>
    <PropTabs><button>塗りつぶし</button><button>線</button><button>影</button></PropTabs>
    <PropBody>
      {FILLS.map((f, i) => <RadioRow key={f}><input type="radio" name="fill" disabled checked={fill === i} readOnly />{f}</RadioRow>)}
      <PropRow><span>色<Colon>：</Colon></span><ColorButton disabled aria-label="色" /></PropRow>
      <Amount id="brightness" label="明るさ" value={50} mt={21} />
      <Amount id="opacity" label="透明度" value={0} mt={21} />
    </PropBody>
  </Props>;
};

const StatusBar = () => {
  const [zoom, setZoom] = useState(24);
  return <Status>
    <StatusItem $w={39} aria-label="ページ一覧"><Svg s={20} w={1.5}><path d="M1 3v14M19 3v14M4.500 4h11v12h-11z" /></Svg></StatusItem>
    <Divider $ml={6} />
    <StatusItem $w={159} $start>ページ-1<Caret $color="#777" /></StatusItem>
    <Divider />
    <StatusItem $w={50} aria-label="ページ追加"><Plus size={20} strokeWidth={1.5} /></StatusItem>
    <Divider />
    <StatusItem $w={90} $blue>ページ-1</StatusItem>
    <Divider />
    <StatusRight>
      <Divider />
      <StatusItem $w={118}><span>図形の個数<Colon>：</Colon> 3</span></StatusItem>
      <Divider />
      <StatusItem $w={60} aria-label="レイヤー"><Layers size={22} strokeWidth={1.4} /><Caret $color="#999" /></StatusItem>
      <StatusItem $w={124} $gap={10}><Svg s={18} w={1.6}><path d="M1 5V1h4M15 1h4v4M19 15v4h-4M5 19H1v-4M6 4h6l2.500 3v9H6z" /></Svg>全画面モード</StatusItem>
      <StatusItem $w={36} aria-label="再生"><CirclePlay size={23} strokeWidth={1.3} /></StatusItem>
      <Divider $ml={7} />
      <StatusItem $w={40} aria-label="縮小"><Minus size={19} strokeWidth={1.5} /></StatusItem>
      <Slider type="range" aria-label="ズーム" value={zoom} onChange={(e) => setZoom(e.target.value)} $w={120} $h={3} $thumb={14} $fill={zoom} $on="#444" $rest="#fff" $ring="#333" />
      <StatusItem $w={42} aria-label="拡大"><Plus size={20} strokeWidth={1.5} /></StatusItem>
      <StatusItem $w={66} $gap={8}>100%<Caret $color="#888" /></StatusItem>
      <Divider $ml={6} />
      <StatusItem $w={50} aria-label="全体表示"><Svg s={18} w={1.8}><path d="M1 6V1h5M14 1h5v5M19 14v5h-5M6 19H1v-5M5.500 6.500h9v7h-9z" /></Svg></StatusItem>
      <StatusItem $w={34} aria-label="幅に合わせる"><Svg s={18} w={1.7}><path d="M1 1h18v18H1zM4 10h12M6.500 7.500L4 10l2.500 2.500M13.500 7.500L16 10l-2.500 2.500" /></Svg></StatusItem>
    </StatusRight>
  </Status>;
};

const App = () => (
  <Shell>
    <GlobalStyle />
    <TopBars />
    <RibbonBar />
    <Work>
      <Rail>
        <Collapse aria-label="折りたたむ"><ChevronsLeft size={26} strokeWidth={2.2} /></Collapse>
        {RAIL.map(([name, icon], i) => <RailItem key={name} $active={i === 1} $long={name.length > 4}><span>{icon}</span>{name}</RailItem>)}
      </Rail>
      <ShapePanel />
      <CanvasArea />
      <SideTabs>
        <SideButton $h={40} aria-label="折りたたむ"><ChevronsRight size={26} strokeWidth={2.2} /></SideButton>
        <SideButton $active $mb={12} aria-label="塗りつぶし"><Bucket s={23} /></SideButton>
        <SideButton $mb={12} aria-label="ページ"><Svg s={22} w={1.9}><path d="M2 1h12l4 4v14H2z" /><path d="M13 1v5h5" fill="currentColor" /><path d="M5 10h2M8.500 10h6.500M5 14h2M8.500 14h6.500" /></Svg></SideButton>
        <SideButton aria-label="ヘルプ"><CircleHelp size={25} strokeWidth={2} /></SideButton>
        <SideButton $last aria-label="設定"><Gear s={23} w={1.9} /></SideButton>
      </SideTabs>
      <PropertyPanel />
    </Work>
    <StatusBar />
  </Shell>
);

export default App;
